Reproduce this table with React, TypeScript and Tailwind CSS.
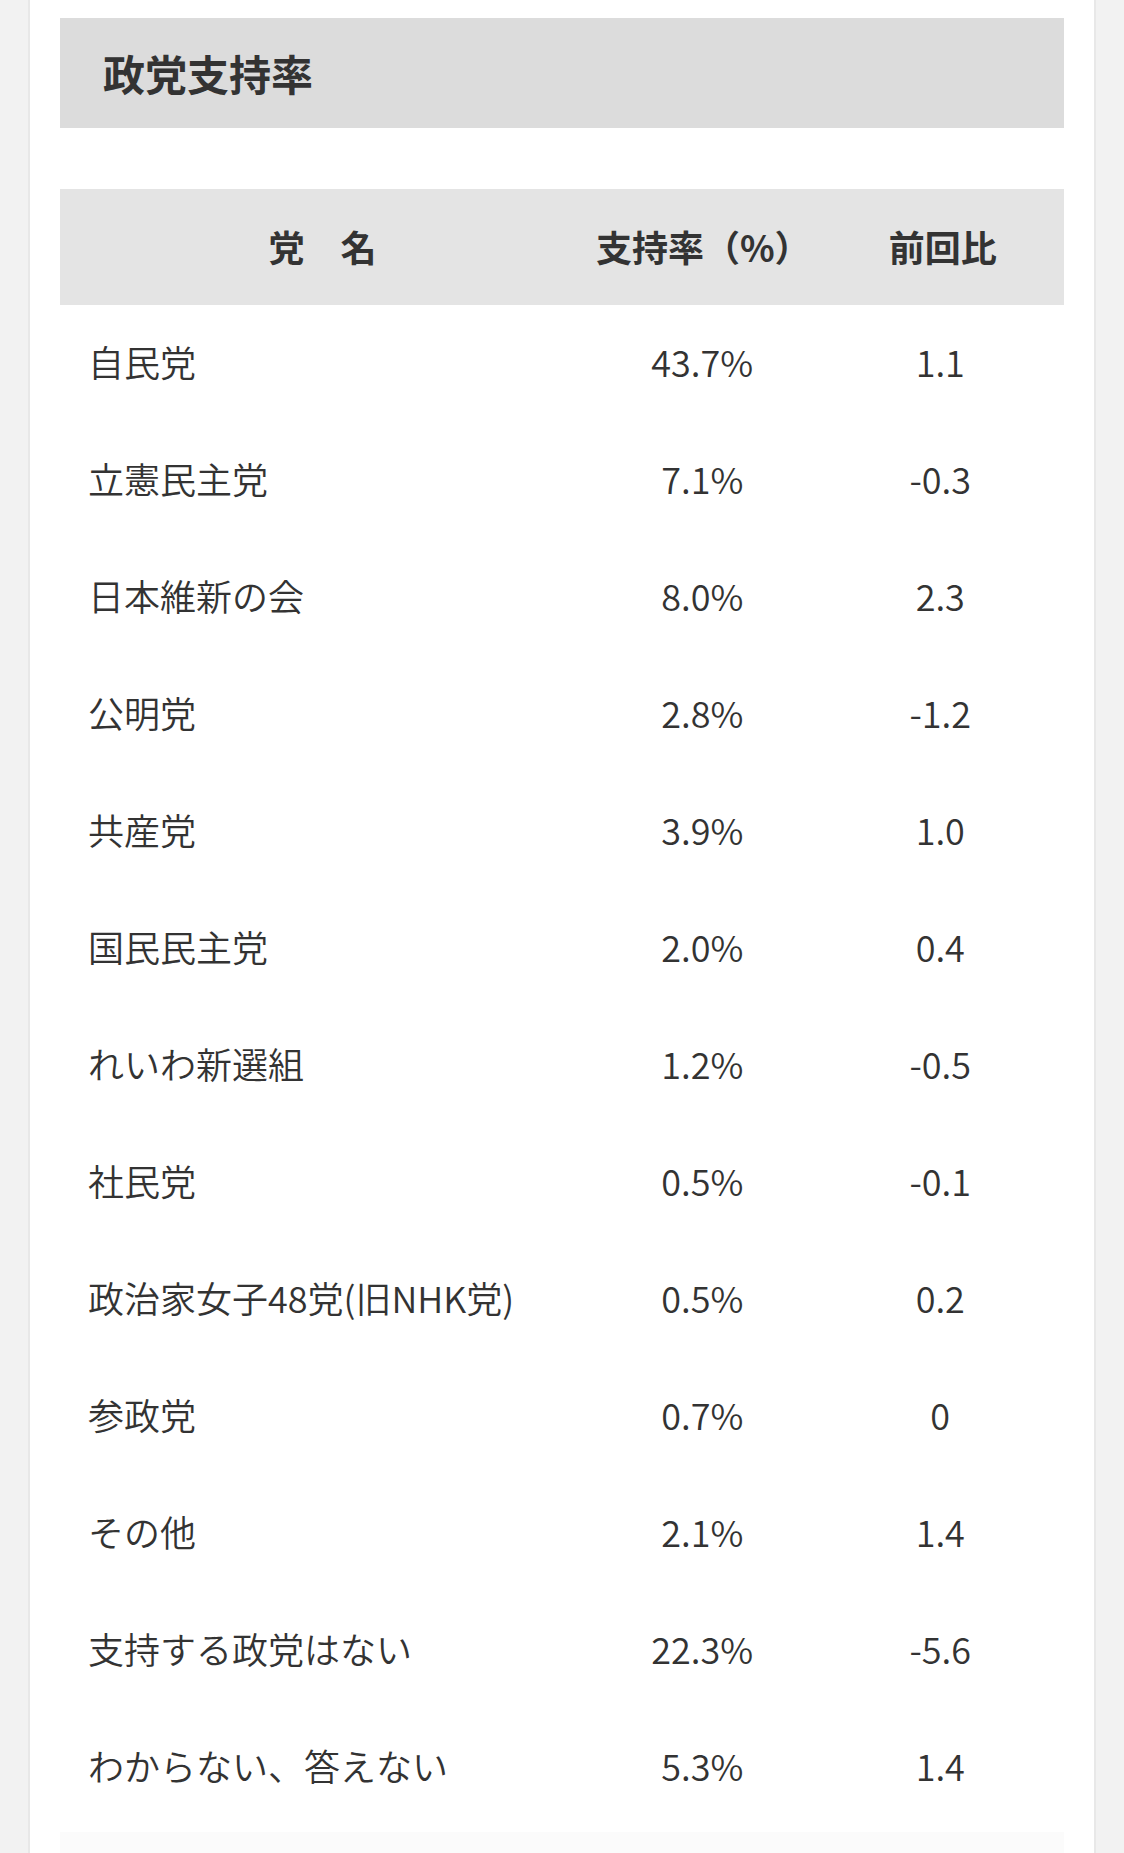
import React from 'react';

type Row = { party: string; rate: string; diff: string };

const ROWS: Row[] = [
  { party: '自民党', rate: '43.7%', diff: '1.1' },
  { party: '立憲民主党', rate: '7.1%', diff: '-0.3' },
  { party: '日本維新の会', rate: '8.0%', diff: '2.3' },
  { party: '公明党', rate: '2.8%', diff: '-1.2' },
  { party: '共産党', rate: '3.9%', diff: '1.0' },
  { party: '国民民主党', rate: '2.0%', diff: '0.4' },
  { party: 'れいわ新選組', rate: '1.2%', diff: '-0.5' },
  { party: '社民党', rate: '0.5%', diff: '-0.1' },
  { party: '政治家女子48党(旧NHK党)', rate: '0.5%', diff: '0.2' },
  { party: '参政党', rate: '0.7%', diff: '0' },
  { party: 'その他', rate: '2.1%', diff: '1.4' },
  { party: '支持する政党はない', rate: '22.3%', diff: '-5.6' },
  { party: 'わからない、答えない', rate: '5.3%', diff: '1.4' },
];

export default function App() {
  return (
    <div
      className="min-h-screen bg-[#f2f2f2] px-[28px] text-[#333333]"
      style={{ fontFamily: '"Noto Sans CJK JP", "Noto Sans", sans-serif' }}
    >
      <div className="min-h-screen border-x-2 border-[#e8e8e8] bg-white px-[30px] pt-[18px]">
        {/* Section title */}
        <h2 className="flex h-[110px] items-center bg-[#dcdcdc] pl-[43px] text-[42px] font-bold leading-none">
          政党支持率
        </h2>

        {/* Support rate table */}
        <table className="mt-[61px] w-full table-fixed border-collapse">
          <thead>
            <tr className="h-[116px] bg-[#e4e4e4] text-[36px] font-bold leading-none">
              <th className="w-[524px] pb-[2px] text-center">党　名</th>
              <th className="w-[236px] pb-[2px] text-center">支持率（%）</th>
              <th className="w-[242px] pb-[2px] text-center">前回比</th>
            </tr>
          </thead>
          <tbody>
            {ROWS.map(row => (
              <tr key={row.party} className="h-[117px] text-[36px] font-[350] leading-none">
                <td className="pb-[5px] pl-[28px] text-left">{row.party}</td>
                <td className="pb-[5px] pr-[2px] text-center">{row.rate}</td>
                <td className="pb-[5px] pr-[5px] text-center">{row.diff}</td>
              </tr>
            ))}
          </tbody>
        </table>

        <div className="mt-[6px] h-[40px] bg-[#fbfbfb]" />
      </div>
    </div>
  );
}
